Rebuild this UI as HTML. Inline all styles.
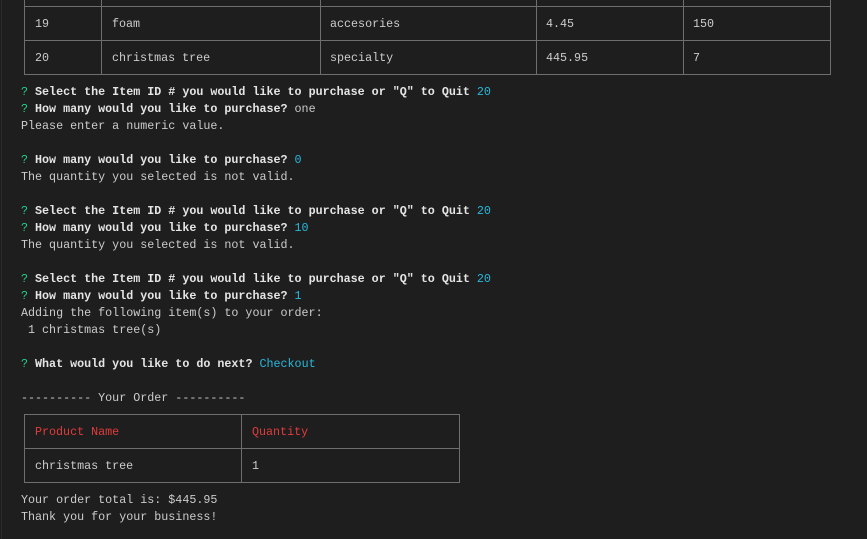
<!DOCTYPE html>
<html><head><style>
html,body{margin:0;padding:0;}
body{width:867px;height:539px;background:#1e1e1e;position:relative;overflow:hidden;font-family:"Liberation Mono",monospace;font-size:11.7px;color:#cccccc;}
.l{position:absolute;left:21px;height:17px;line-height:17px;white-space:pre;}
.b{font-weight:bold;color:#e5e5e5;}
.g{color:#23d18b;}
.c{color:#29b8db;}
.r{color:#e03c3c;}
.h{position:absolute;height:1px;background:#6e6e6e;}
.v{position:absolute;width:1px;background:#6e6e6e;}
.t{position:absolute;height:17px;line-height:17px;white-space:pre;}
</style></head><body>
<div class="v" style="left:1px;top:0;height:539px;background:#2a2a2a"></div>
<div class="h" style="left:24px;width:807px;top:6px"></div>
<div class="h" style="left:24px;width:807px;top:40px"></div>
<div class="h" style="left:24px;width:807px;top:74px"></div>
<div class="v" style="left:24px;top:0;height:75px"></div>
<div class="v" style="left:101px;top:0;height:75px"></div>
<div class="v" style="left:320px;top:0;height:75px"></div>
<div class="v" style="left:536px;top:0;height:75px"></div>
<div class="v" style="left:683px;top:0;height:75px"></div>
<div class="v" style="left:830px;top:0;height:75px"></div>
<div class="t" style="left:35px;top:16px">19</div>
<div class="t" style="left:112px;top:16px">foam</div>
<div class="t" style="left:330px;top:16px">accesories</div>
<div class="t" style="left:546px;top:16px">4.45</div>
<div class="t" style="left:693px;top:16px">150</div>
<div class="t" style="left:35px;top:50px">20</div>
<div class="t" style="left:112px;top:50px">christmas tree</div>
<div class="t" style="left:330px;top:50px">specialty</div>
<div class="t" style="left:546px;top:50px">445.95</div>
<div class="t" style="left:693px;top:50px">7</div>

<div class="l" style="top:84px"><span class="g">?</span> <span class="b">Select the Item ID # you would like to purchase or "Q" to Quit</span> <span class="c">20</span></div>
<div class="l" style="top:101px"><span class="g">?</span> <span class="b">How many would you like to purchase?</span> one</div>
<div class="l" style="top:118px">Please enter a numeric value.</div>
<div class="l" style="top:152px"><span class="g">?</span> <span class="b">How many would you like to purchase?</span> <span class="c">0</span></div>
<div class="l" style="top:169px">The quantity you selected is not valid.</div>
<div class="l" style="top:203px"><span class="g">?</span> <span class="b">Select the Item ID # you would like to purchase or "Q" to Quit</span> <span class="c">20</span></div>
<div class="l" style="top:220px"><span class="g">?</span> <span class="b">How many would you like to purchase?</span> <span class="c">10</span></div>
<div class="l" style="top:237px">The quantity you selected is not valid.</div>
<div class="l" style="top:271px"><span class="g">?</span> <span class="b">Select the Item ID # you would like to purchase or "Q" to Quit</span> <span class="c">20</span></div>
<div class="l" style="top:288px"><span class="g">?</span> <span class="b">How many would you like to purchase?</span> <span class="c">1</span></div>
<div class="l" style="top:305px">Adding the following item(s) to your order:</div>
<div class="l" style="top:322px"> 1 christmas tree(s)</div>
<div class="l" style="top:356px"><span class="g">?</span> <span class="b">What would you like to do next?</span> <span class="c">Checkout</span></div>
<div class="l" style="top:390px">---------- Your Order ----------</div>

<div class="h" style="left:24px;width:436px;top:414px"></div>
<div class="h" style="left:24px;width:436px;top:448px"></div>
<div class="h" style="left:24px;width:436px;top:482px"></div>
<div class="v" style="left:24px;top:414px;height:69px"></div>
<div class="v" style="left:241px;top:414px;height:69px"></div>
<div class="v" style="left:459px;top:414px;height:69px"></div>
<div class="t r" style="left:35px;top:424px">Product Name</div>
<div class="t r" style="left:252px;top:424px">Quantity</div>
<div class="t" style="left:35px;top:458px">christmas tree</div>
<div class="t" style="left:252px;top:458px">1</div>

<div class="l" style="top:492px">Your order total is: $445.95</div>
<div class="l" style="top:509px">Thank you for your business!</div>
</body></html>
